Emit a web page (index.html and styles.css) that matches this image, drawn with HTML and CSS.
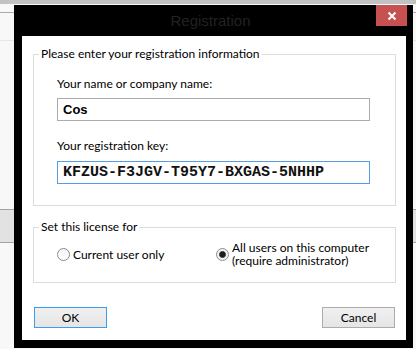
FILE: index.html
```html
<!DOCTYPE html>
<html lang="en">
<head>
    <meta charset="UTF-8">
    <title>Registration</title>
    <link rel="stylesheet" href="styles.css">
</head>
<body>

    <!-- Dialog window -->
    <div class="window">
        <div class="titlebar">
            <span></span>
            <div class="title">Registration</div>
            <button type="button" class="close" aria-label="Close">
                <svg width="10" height="10" viewBox="0 0 10 10">
                    <path d="M1.5 1.5 L8.5 8.5 M8.5 1.5 L1.5 8.5" stroke="#fff" stroke-width="2" fill="none"/>
                </svg>
            </button>
        </div>

        <form class="client">
            <!-- Registration info -->
            <fieldset class="group">
                <legend>Please enter your registration information</legend>
                <div class="group-body info-body">
                    <label class="field-label" for="name">Your name or company name:</label>
                    <input id="name" class="text-input name-input" type="text" value="Cos">
                    <label class="field-label key-label" for="key">Your registration key:</label>
                    <input id="key" class="text-input key-input" type="text" value="KFZUS-F3JGV-T95Y7-BXGAS-5NHHP">
                </div>
            </fieldset>

            <!-- License scope -->
            <fieldset class="group license">
                <legend>Set this license for</legend>
                <div class="group-body options">
                    <label class="option">
                        <input type="radio" name="scope">
                        <span>Current user only</span>
                    </label>
                    <label class="option">
                        <input type="radio" name="scope" checked>
                        <span>All users on this computer<br>(require administrator)</span>
                    </label>
                </div>
            </fieldset>

            <div class="buttons">
                <button type="button" class="btn btn-default">OK</button>
                <button type="button" class="btn">Cancel</button>
            </div>
        </form>
    </div>

</body>
</html>
```

FILE: styles.css
```css
body {
    margin: 0;
    padding: 5px 3px 1px 14px;
    font-family: Lato, "Liberation Sans", sans-serif;
    font-size: 12px;
    color: #000;
    background:
        linear-gradient(#c2c2c2, #c2c2c2) 0 0 / 100% 4px no-repeat,
        linear-gradient(#a9a9a9, #a9a9a9) 0 12px / 100% 1px no-repeat,
        linear-gradient(#dfe9f4, #dfe9f4) 0 40px / 100% 1px no-repeat,
        linear-gradient(#a3a3a3, #a3a3a3) 0 209px / 100% 1px no-repeat,
        linear-gradient(#e2e2e2, #e2e2e2) 0 210px / 100% 32px no-repeat,
        linear-gradient(#a3a3a3, #a3a3a3) 0 242px / 100% 1px no-repeat,
        #f8f8f8;
}

/* Window frame */
.window {
    width: 399px;
    height: 343px;
    background-color: #000;
    box-sizing: border-box;
}

.titlebar {
    height: 31px;
    display: grid;
    grid-template-columns: 1fr auto 1fr;
    padding-right: 6px;
}

.title {
    font-family: "Liberation Sans", sans-serif;
    font-size: 15px;
    line-height: 31px;
    color: #222;
}

.close {
    justify-self: end;
    width: 31px;
    height: 21px;
    border: none;
    padding: 0;
    background-color: #c75050;
    display: flex;
    align-items: center;
    justify-content: center;
}

/* White client area */
.client {
    margin: 0 7px 0 8px;
    height: 304px;
    background-color: #fff;
    padding: 11px 10px 0 11px;
    box-sizing: border-box;
}

/* Group boxes */
.group {
    margin: 0;
    padding: 0 0 0 5px;
    border: 1px solid #dcdcdc;
    width: 363px;
    box-sizing: border-box;
}

.group legend {
    padding: 0 2px;
    line-height: 14px;
}

.group-body {
    padding-left: 18px;
}

.info-body {
    display: flex;
    flex-direction: column;
    align-items: flex-start;
    padding-top: 15px;
    padding-bottom: 21px;
}

.field-label {
    line-height: 15px;
}

.key-label {
    margin-top: 17px;
}

.text-input {
    box-sizing: border-box;
    width: 313px;
    height: 23px;
    margin: 7px 0 0;
    border: 1px solid #ababab;
    padding: 0 5px;
    outline: none;
}

.name-input {
    font-family: "Liberation Sans", sans-serif;
    font-weight: bold;
    font-size: 13px;
}

.key-input {
    margin-top: 8px;
    border-color: #569de5;
    font-family: "Liberation Mono", monospace;
    font-weight: bold;
    font-size: 15px;
    color: #111;
}

/* Radio options */
.license {
    margin-top: 14px;
}

.options {
    display: grid;
    grid-template-columns: 159px 1fr;
    align-items: center;
    height: 26px;
    padding-top: 7px;
    padding-bottom: 15px;
}

.option {
    display: flex;
    align-items: center;
    gap: 3px;
    line-height: 13px;
}

.option input {
    appearance: none;
    margin: 0;
    width: 13px;
    height: 13px;
    border: 1px solid #8c8c8c;
    border-radius: 50%;
    background: linear-gradient(#f4f4f4, #fff);
    flex-shrink: 0;
}

.option input:checked {
    background: radial-gradient(circle, #1c1c1c 0 2.6px, #6a6a6a 3.3px, #f2f2f2 3.8px);
}

/* Dialog buttons */
.buttons {
    display: flex;
    justify-content: space-between;
    margin-top: 24px;
    padding: 0 1px;
}

.btn {
    width: 73px;
    height: 21px;
    padding: 0;
    font-family: Lato, "Liberation Sans", sans-serif;
    font-size: 12px;
    color: #000;
    border: 1px solid #acacac;
    background: linear-gradient(#f0f0f0, #e5e5e5);
}

.btn-default {
    border-color: #3c9df0;
}
```
